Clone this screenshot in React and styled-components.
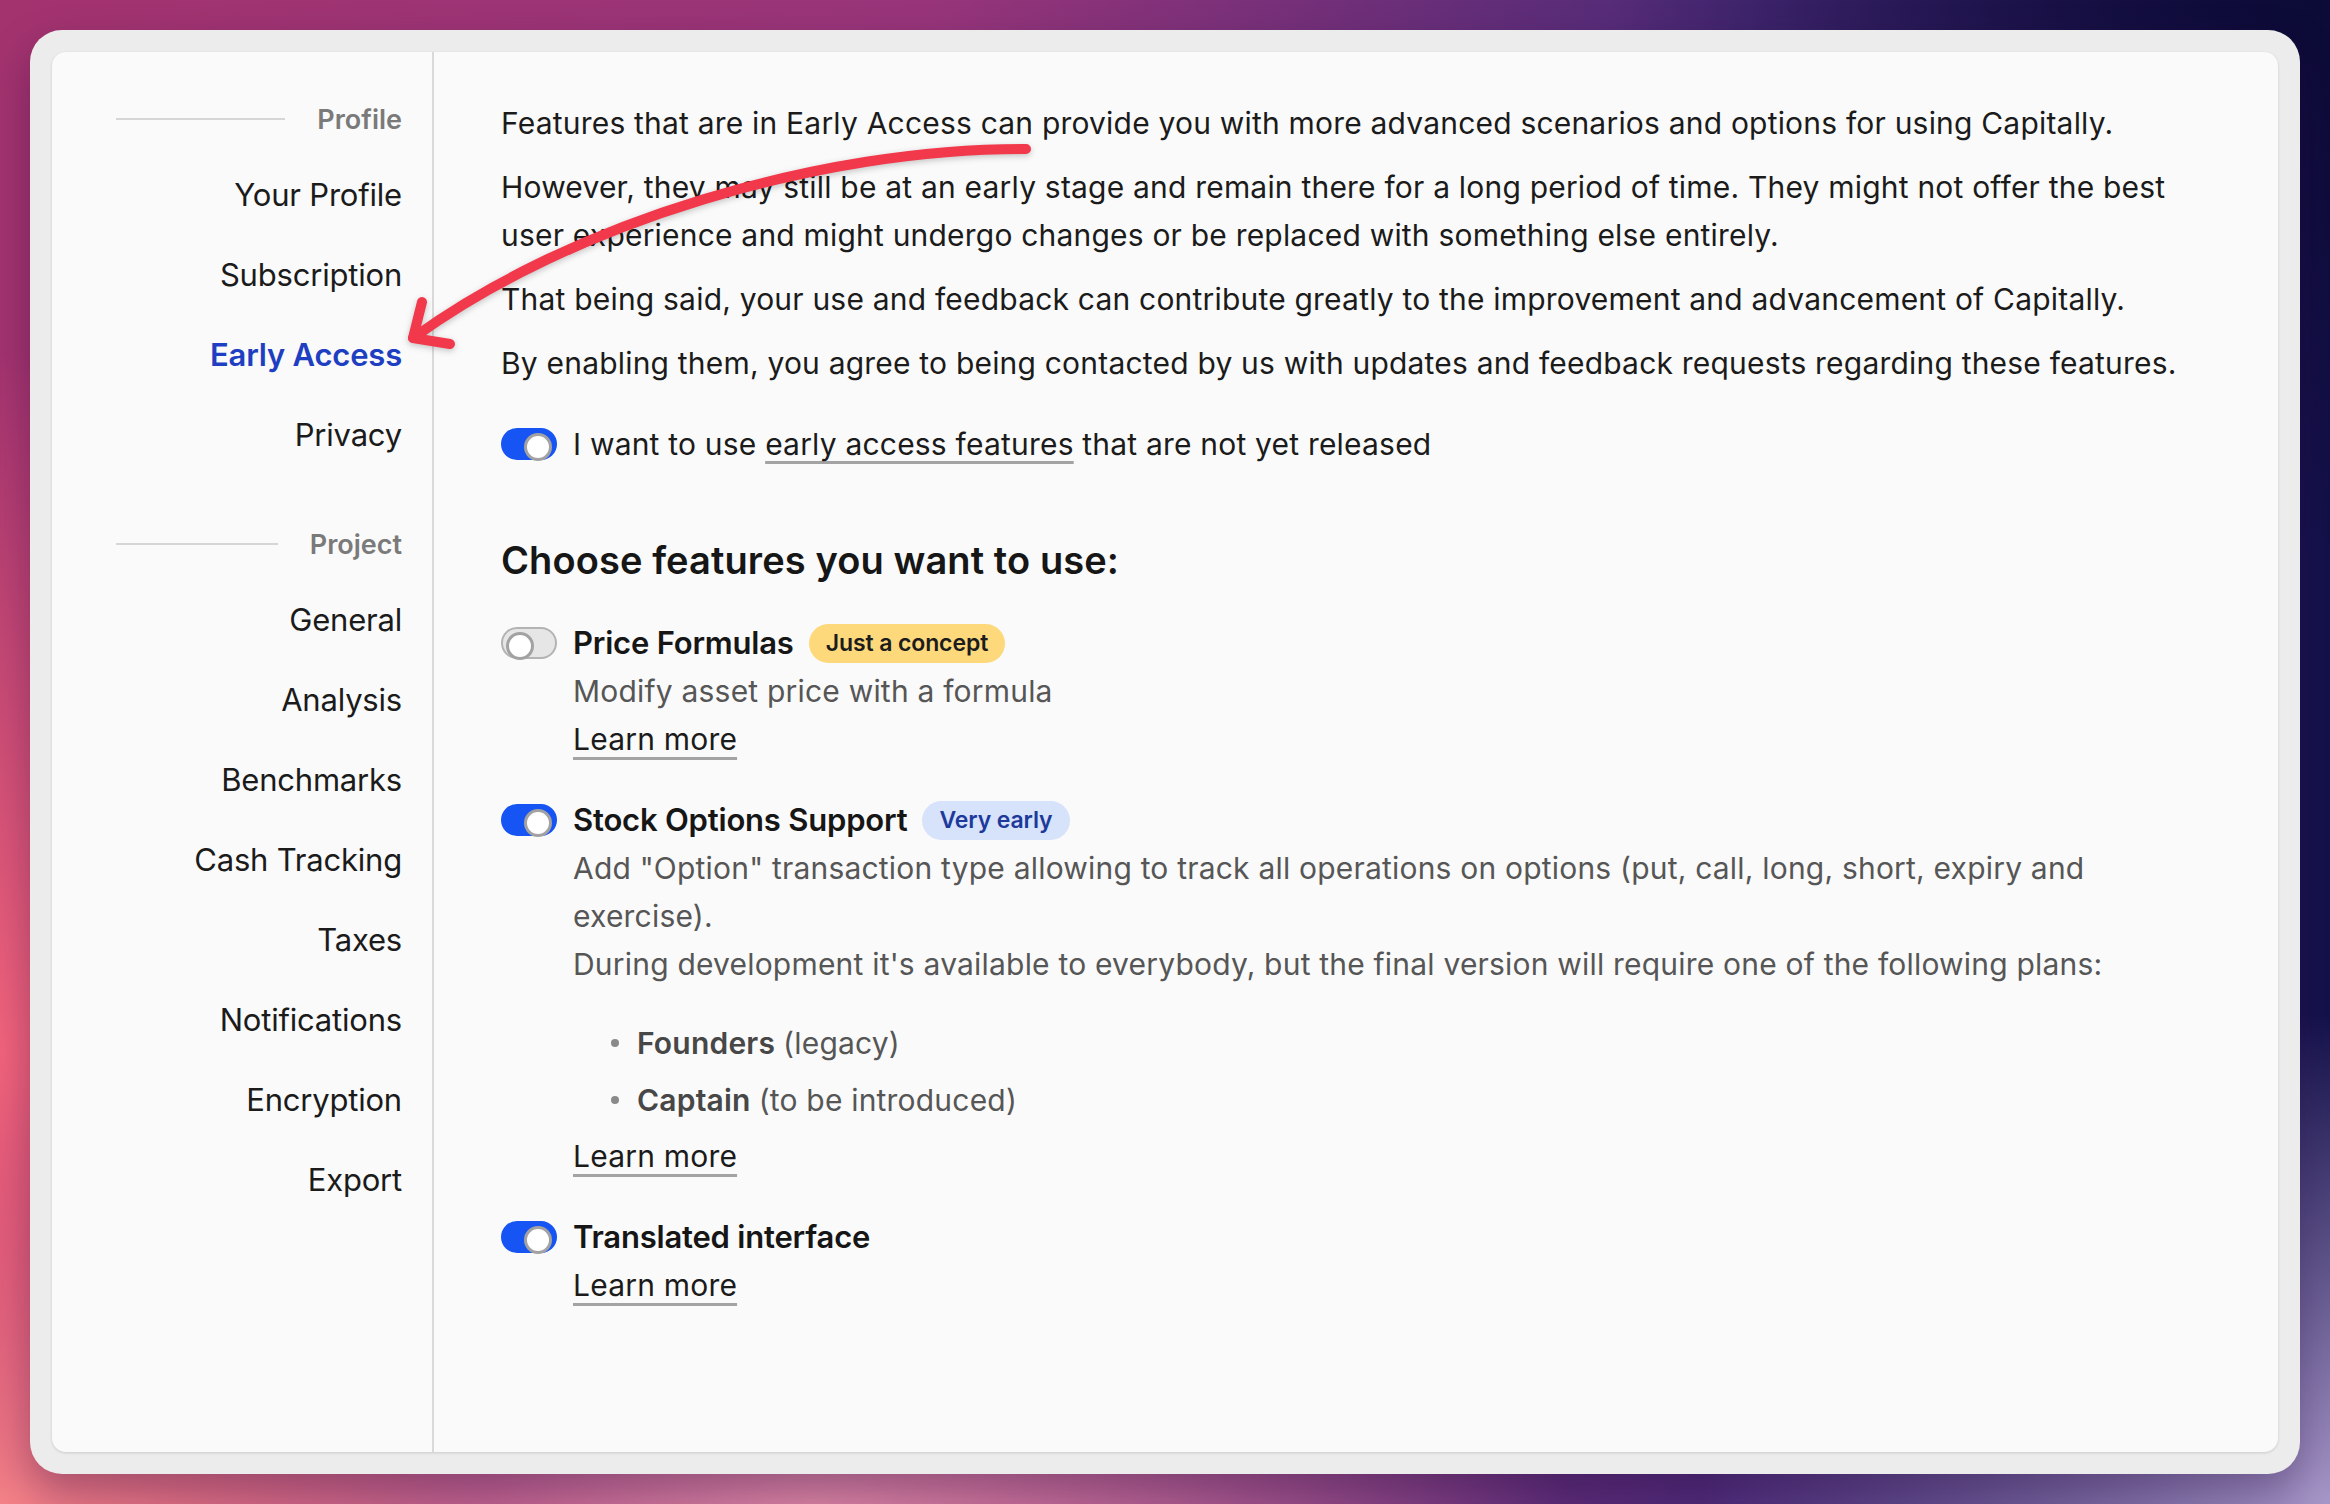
import React from 'react';
import styled, { createGlobalStyle } from 'styled-components';

const GlobalStyle = createGlobalStyle`
  html, body { margin: 0; padding: 0; }
  body {
    width: 2330px;
    height: 1504px;
    overflow: hidden;
    font-family: Inter, "Noto Sans", "Liberation Sans", sans-serif;
    -webkit-font-smoothing: antialiased;
  }
  * { box-sizing: border-box; }
`;

const Page = styled.div`
  width: 2330px;
  height: 1504px;
  padding: 30px;
  background:
    radial-gradient(ellipse 900px 700px at 100% 100%, #a897c9 0%, rgba(168,151,201,0) 70%),
    radial-gradient(ellipse 800px 1000px at 0% 70%, #f3647c 0%, rgba(243,100,124,0) 70%),
    radial-gradient(ellipse 700px 500px at 0% 100%, #f4928e 0%, rgba(244,146,142,0) 70%),
    radial-gradient(ellipse 1000px 500px at 35% 100%, #dc86a4 0%, rgba(220,134,164,0) 75%),
    radial-gradient(ellipse 900px 700px at 100% 0%, #0c0a36 0%, rgba(12,10,54,0) 80%),
    linear-gradient(90deg, #a3336f 0%, #98357a 40%, #4a2a78 75%, #13114a 100%);
`;

const Frame = styled.div`
  height: 100%;
  padding: 22px;
  background: #ececec;
  border-radius: 32px;
  box-shadow: 0 18px 40px rgba(40, 10, 60, 0.35);
`;

const Panel = styled.div`
  position: relative;
  height: 100%;
  display: flex;
  background: #fafafa;
  border-radius: 14px;
  box-shadow: 0 1px 3px rgba(0, 0, 0, 0.14);
`;

const Sidebar = styled.nav`
  width: 382px;
  flex: none;
  border-right: 2px solid #d9d9d9;
  padding: 47px 30px 0 64px;
  display: flex;
  flex-direction: column;
`;

const NavGroup = styled.div`
  display: flex;
  flex-direction: column;
  & + & { margin-top: 49px; }
`;

const GroupHeader = styled.div`
  display: flex;
  align-items: center;
  gap: 32px;
  height: 40px;
  margin-bottom: 16px;
  font-size: 27px;
  font-weight: 600;
  color: #7a7a7a;
  &::before {
    content: '';
    flex: 1;
    height: 2px;
    background: #d6d6d6;
  }
`;

const NavItem = styled.a`
  display: block;
  height: 80px;
  line-height: 80px;
  text-align: right;
  font-size: 31px;
  font-weight: ${p => (p.$active ? 600 : 400)};
  color: ${p => (p.$active ? '#1f3fc2' : '#1b1b1b')};
  text-decoration: none;
  letter-spacing: -0.2px;
`;

const Main = styled.main`
  flex: 1;
  padding: 47px 80px 0 67px;
  display: flex;
  flex-direction: column;
  color: #1b1b1b;
  font-size: 30px;
  line-height: 48px;
  letter-spacing: 0.2px;
`;

const Para = styled.p`
  margin: 0 0 16px 0;
  &:last-of-type { margin-bottom: 0; }
`;

const ToggleRow = styled.label`
  display: flex;
  align-items: center;
  gap: 16px;
  height: 48px;
  margin-top: 33px;
`;

const Switch = styled.span`
  position: relative;
  flex: none;
  width: 56px;
  height: 32px;
  border-radius: 16px;
  background: ${p => (p.$on ? '#1655f4' : '#e6e6e6')};
  border: ${p => (p.$on ? 'none' : '2px solid #b3b3b3')};
  &::after {
    content: '';
    position: absolute;
    top: 50%;
    ${p => (p.$on ? 'right: 5px;' : 'left: 3px;')}
    width: 22px;
    height: 22px;
    margin-top: -11px;
    border-radius: 50%;
    background: #ffffff;
    border: 3px solid #a2a2a2;
  }
`;

const InlineLink = styled.a`
  color: inherit;
  text-decoration: underline;
  text-decoration-color: #a3a3a3;
  text-decoration-thickness: 3px;
  text-underline-offset: 6px;
`;

const Heading = styled.h2`
  margin: 68px 0 0 0;
  font-size: 38px;
  line-height: 48px;
  font-weight: 600;
  letter-spacing: 0.1px;
  color: #161616;
`;

const Features = styled.div`
  display: flex;
  flex-direction: column;
  gap: 33px;
  margin-top: 35px;
`;

const Feature = styled.div`
  display: grid;
  grid-template-columns: 56px 1fr;
  column-gap: 16px;
  align-items: start;
`;

const SwitchCell = styled.div`
  height: 48px;
  display: flex;
  align-items: center;
`;

const FeatureBody = styled.div`
  display: flex;
  flex-direction: column;
`;

const TitleRow = styled.div`
  display: flex;
  align-items: center;
  gap: 15px;
  height: 48px;
`;

const Title = styled.span`
  font-weight: 600;
  font-size: 31px;
  letter-spacing: -0.2px;
  color: #161616;
`;

const Badge = styled.span`
  display: inline-flex;
  align-items: center;
  height: 39px;
  padding: 0 17px;
  border-radius: 20px;
  font-size: 23px;
  font-weight: 600;
  letter-spacing: -0.1px;
  background: ${p => (p.$tone === 'blue' ? '#d7e2fb' : '#fdd97c')};
  color: ${p => (p.$tone === 'blue' ? '#1d3a9b' : '#1c1c1c')};
`;

const Desc = styled.div`
  color: #565656;
`;

const PlanList = styled.ul`
  list-style: none;
  margin: 26px 0 4px 0;
  padding: 0 0 0 38px;
  color: #565656;
`;

const PlanItem = styled.li`
  display: flex;
  align-items: center;
  height: 57px;
  &::before {
    content: '';
    width: 8px;
    height: 8px;
    border-radius: 50%;
    background: #8a8a8a;
    margin-right: 18px;
  }
  b { font-weight: 600; color: #474747; margin-right: 8px; }
`;

const LearnMore = styled.a`
  align-self: flex-start;
  color: #1b1b1b;
  text-decoration: underline;
  text-decoration-color: #a3a3a3;
  text-decoration-thickness: 3px;
  text-underline-offset: 7px;
`;

const ArrowLayer = styled.svg`
  position: absolute;
  left: 0;
  top: 0;
  width: 1100px;
  height: 400px;
  pointer-events: none;
  overflow: visible;
  filter: drop-shadow(0 2px 3px rgba(0, 0, 0, 0.22));
`;

const profileNav = ['Your Profile', 'Subscription', 'Early Access', 'Privacy'];
const projectNav = ['General', 'Analysis', 'Benchmarks', 'Cash Tracking', 'Taxes', 'Notifications', 'Encryption', 'Export'];

export default function App() {
  return (
    <>
      <GlobalStyle />
      <Page>
        <Frame>
          <Panel>
            <Sidebar>
              <NavGroup>
                <GroupHeader>Profile</GroupHeader>
                {profileNav.map(n => (
                  <NavItem key={n} $active={n === 'Early Access'}>{n}</NavItem>
                ))}
              </NavGroup>
              <NavGroup>
                <GroupHeader>Project</GroupHeader>
                {projectNav.map(n => (
                  <NavItem key={n}>{n}</NavItem>
                ))}
              </NavGroup>
            </Sidebar>
            <Main>
              <Para>Features that are in Early Access can provide you with more advanced scenarios and options for using Capitally.</Para>
              <Para>However, they may still be at an early stage and remain there for a long period of time. They might not offer the best user experience and might undergo changes or be replaced with something else entirely.</Para>
              <Para>That being said, your use and feedback can contribute greatly to the improvement and advancement of Capitally.</Para>
              <Para>By enabling them, you agree to being contacted by us with updates and feedback requests regarding these features.</Para>
              <ToggleRow>
                <Switch $on />
                <span>I want to use <InlineLink>early access features</InlineLink> that are not yet released</span>
              </ToggleRow>
              <Heading>Choose features you want to use:</Heading>
              <Features>
                <Feature>
                  <SwitchCell><Switch /></SwitchCell>
                  <FeatureBody>
                    <TitleRow>
                      <Title>Price Formulas</Title>
                      <Badge>Just a concept</Badge>
                    </TitleRow>
                    <Desc>Modify asset price with a formula</Desc>
                    <LearnMore>Learn more</LearnMore>
                  </FeatureBody>
                </Feature>
                <Feature>
                  <SwitchCell><Switch $on /></SwitchCell>
                  <FeatureBody>
                    <TitleRow>
                      <Title>Stock Options Support</Title>
                      <Badge $tone="blue">Very early</Badge>
                    </TitleRow>
                    <Desc>Add "Option" transaction type allowing to track all operations on options (put, call, long, short, expiry and exercise).</Desc>
                    <Desc>During development it's available to everybody, but the final version will require one of the following plans:</Desc>
                    <PlanList>
                      <PlanItem><b>Founders</b>(legacy)</PlanItem>
                      <PlanItem><b>Captain</b>(to be introduced)</PlanItem>
                    </PlanList>
                    <LearnMore>Learn more</LearnMore>
                  </FeatureBody>
                </Feature>
                <Feature>
                  <SwitchCell><Switch $on /></SwitchCell>
                  <FeatureBody>
                    <TitleRow>
                      <Title>Translated interface</Title>
                    </TitleRow>
                    <LearnMore>Learn more</LearnMore>
                  </FeatureBody>
                </Feature>
              </Features>
            </Main>
            <ArrowLayer viewBox="0 0 1100 400">
              <g fill="none" stroke="#f2384b" strokeWidth="10" strokeLinecap="round" strokeLinejoin="round">
                <path d="M974 97 C770 96 520 170 361 286" />
                <path d="M370 250 L361 286 L398 292" />
              </g>
            </ArrowLayer>
          </Panel>
        </Frame>
      </Page>
    </>
  );
}
